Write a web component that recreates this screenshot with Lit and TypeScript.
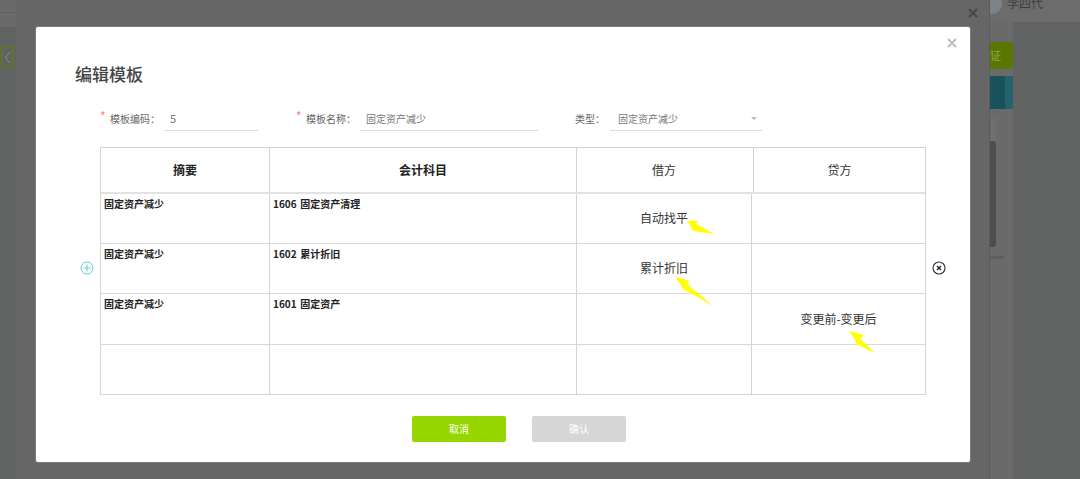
import { LitElement, html, css, svg } from "lit";
import { customElement } from "lit/decorators.js";

const rows = [
  { a: "固定资产减少", b: "1606 固定资产清理", c: "自动找平", d: "" },
  { a: "固定资产减少", b: "1602 累计折旧", c: "累计折旧", d: "" },
  { a: "固定资产减少", b: "1601 固定资产", c: "", d: "变更前-变更后" },
  { a: "", b: "", c: "", d: "" },
];

const arrows = [
  "686.7,220.7 698.3,220.7 696,223.7 714,234 692.7,230.7 690,225",
  "675,276.7 689.3,280.7 687.3,284.3 713.3,306 683.3,289.3 681,285.3",
  "849.3,331.3 863.3,334.7 860.7,339 875,353.3 856.7,344.3 855,340",
];

@customElement("app-root")
export class AppRoot extends LitElement {
  static styles = css`
    :host { display: block; width: 1080px; height: 479px; position: relative; overflow: hidden;
      font-family: "Noto Sans CJK SC", "Noto Sans", sans-serif; background: #606361; }
    .page { display: flex; height: 479px; }
    .rail { width: 16px; flex: none; background: #606361; display: flex; flex-direction: column; }
    .rail-top { height: 27px; background: #6a6a6a; overflow: hidden; }
    .rail-line { height: 1px; background: #5e5e5e; margin-top: 12px; }
    .collapse { width: 12px; height: 22px; margin: 19px 0 0 1px; border: 1px solid #5f8000;
      display: flex; align-items: center; justify-content: center; box-sizing: border-box; }
    .center { width: 974px; flex: none; background: #666; box-sizing: border-box; border-right: 1px solid #5c5c5c; }
    .side { flex: 1; display: flex; flex-direction: column; background: #606361; }
    .user { height: 22px; background: #6c6c6c; display: flex; align-items: flex-start; gap: 5px; overflow: hidden; }
    .avatar { width: 12px; height: 20px; margin-top: -6px; background: #7d828a; border-radius: 0 10px 10px 0; flex: none; }
    .user span { font-size: 12px; line-height: 12px; margin-top: -3px; color: #3c3c3c; }
    .side-col { width: 23px; flex: 1; background: #6a6a6a; display: flex; flex-direction: column; }
    .green { margin-top: 20px; height: 27px; background: #5a7800; border-radius: 0 3px 3px 0; color: #8ea35c;
      font-size: 11px; line-height: 27px; }
    .teal { margin-top: 7px; height: 33px; background: #1a525c; border-right: 8px solid #22636e; box-sizing: border-box; }
    .track { margin-top: 9px; height: 106px; background: #6e6e6e; width: 6px; padding-top: 23px; }
    .thumb { width: 6px; height: 106px; background: #4e4e4e; border-radius: 0 3px 3px 0; }
    .dash { width: 14px; height: 3px; background: #5f5f5f; margin-top: 9px; }

    .modal { position: absolute; left: 36px; top: 27px; width: 934px; height: 435px; background: #fff;
      border-radius: 2px; box-shadow: 0 0 0 1px rgba(255,255,255,.15); display: flex; flex-direction: column; box-sizing: border-box; }
    .x { position: absolute; display: block; }
    .x-modal { right: 12px; top: 10px; }
    .x-outer { left: 967px; top: 7px; }
    h1 { margin: 36px 0 0 39px; font-size: 17px; line-height: 22px; font-weight: 500; color: #444; }
    .form { display: flex; align-items: flex-end; margin: 22px 0 0 64px; height: 24px; font-size: 10px; color: #666; }
    .star { color: #f77; width: 10px; font-size: 12px; line-height: 18px; flex: none; align-self: flex-start; }
    .label { flex: none; line-height: 24px; align-self: flex-start; width: 54px; }
    .label.short { width: 35px; }
    .input { box-sizing: border-box; height: 24px; border-bottom: 1px solid #ddd; line-height: 24px; padding-left: 6px; color: #777; flex: none; position: relative; }
    .w1 { width: 94px; margin-right: 38px; font-size: 11px; line-height: 22px; }
    .w2 { width: 178px; margin-right: 37px; }
    .w3 { width: 152px; padding-left: 8px; }
    .caret { position: absolute; right: 5px; top: 10px; width: 0; height: 0; border: 3px solid transparent; border-top: 3px solid #bbb; }

    .body { display: flex; align-items: center; margin: 16px 0 0 44px; }
    .icon { flex: none; width: 14px; height: 14px; margin-bottom: 6px; }
    .table { width: 826px; height: 248px; margin: 0 6px; box-sizing: border-box; border: 1px solid #d4d4d4; flex: none; }
    .row { display: grid; grid-template-columns: 169px 307px 175px 1fr; height: 50px; box-sizing: border-box; border-bottom: 1px solid #d9d9d9; }
    .row:nth-child(4) { height: 51px; }
    .row:nth-child(5) { height: 49px; border-bottom: 0; }
    .row > div { border-right: 1px solid #d4d4d4; box-sizing: border-box; min-width: 0; }
    .row > div:last-child { border-right: 0; }
    .row.head { height: 46px; grid-template-columns: 169px 307px 177px 1fr; border-bottom: 2px solid #e2e2e2; }
    .head > div { display: flex; align-items: center; justify-content: center; font-size: 12px; color: #333; padding: 0 0 2px 0; }
    .head > div:nth-child(3) { padding-right: 2px; }
    .head b { color: #222; font-weight: 700; }
    .t { font-size: 10px; font-weight: 700; color: #222; padding: 2px 0 0 3px; line-height: 15px; word-spacing: 1.5px; }
    .v { font-size: 12px; color: #333; display: flex; align-items: center; justify-content: center; padding-bottom: 2px; }
    .footer { display: flex; justify-content: center; gap: 26px; margin: 21px 0 0; padding-left: 32px; }
    .btn { width: 94px; height: 26px; border-radius: 2px; color: #fff; font-size: 10px; line-height: 26px; text-align: center; }
    .ok { background: #98d600; }
    .off { background: #d6d6d6; }
    .arrows { position: absolute; left: 0; top: 0; width: 1080px; height: 479px; pointer-events: none; }
  `;

  private xIcon(cls: string, color: string) {
    return html`<svg class="x ${cls}" width="12" height="12" viewBox="0 0 12 12"><path d="M2 2 L10 10 M10 2 L2 10" stroke=${color} stroke-width="2" fill="none"/></svg>`;
  }

  render() {
    return html`
      <div class="page">
        <div class="rail">
          <div class="rail-top"><div class="rail-line"></div></div>
          <div class="collapse"><svg width="7" height="13" viewBox="0 0 7 13"><path d="M6 1 L1.5 6.5 L6 12" stroke="#7a9a60" fill="none"/></svg></div>
        </div>
        <div class="center"></div>
        <div class="side">
          <div class="user"><div class="avatar"></div><span>李四代</span></div>
          <div class="side-col">
            <div class="green">证</div>
            <div class="teal"></div>
            <div class="track"><div class="thumb"></div></div>
            <div class="dash"></div>
          </div>
        </div>
      </div>
      ${this.xIcon("x-outer", "#474747")}
      <div class="modal">
        ${this.xIcon("x-modal", "#bdbdbd")}
        <h1>编辑模板</h1>
        <div class="form">
          <span class="star">*</span><span class="label">模板编码：</span>
          <div class="input w1">5</div>
          <span class="star">*</span><span class="label">模板名称：</span>
          <div class="input w2">固定资产减少</div>
          <span class="label short">类型：</span>
          <div class="input w3">固定资产减少<i class="caret"></i></div>
        </div>
        <div class="body">
          <svg class="icon" viewBox="0 0 14 14"><circle cx="7" cy="7" r="6" fill="none" stroke="#62c8e2"/><path d="M3.5 7 H10.5 M7 3.5 V10.5" stroke="#62c8e2"/></svg>
          <div class="table">
            <div class="row head">
              <div><b>摘要</b></div><div><b>会计科目</b></div><div>借方</div><div>贷方</div>
            </div>
            ${rows.map(
              (r) => html`<div class="row">
                <div class="t">${r.a}</div>
                <div class="t">${r.b}</div>
                <div class="v">${r.c}</div>
                <div class="v">${r.d}</div>
              </div>`
            )}
          </div>
          <svg class="icon" viewBox="0 0 14 14"><circle cx="7" cy="7" r="6" fill="none" stroke="#2f3a4a" stroke-width="1.2"/><path d="M5 5 L9 9 M9 5 L5 9" stroke="#222" stroke-width="1.4"/></svg>
        </div>
        <div class="footer">
          <div class="btn ok">取消</div>
          <div class="btn off">确认</div>
        </div>
      </div>
      <svg class="arrows" viewBox="0 0 1080 479">
        ${arrows.map((p) => svg`<polygon points=${p} fill="#ffff00"></polygon>`)}
      </svg>
    `;
  }
}
